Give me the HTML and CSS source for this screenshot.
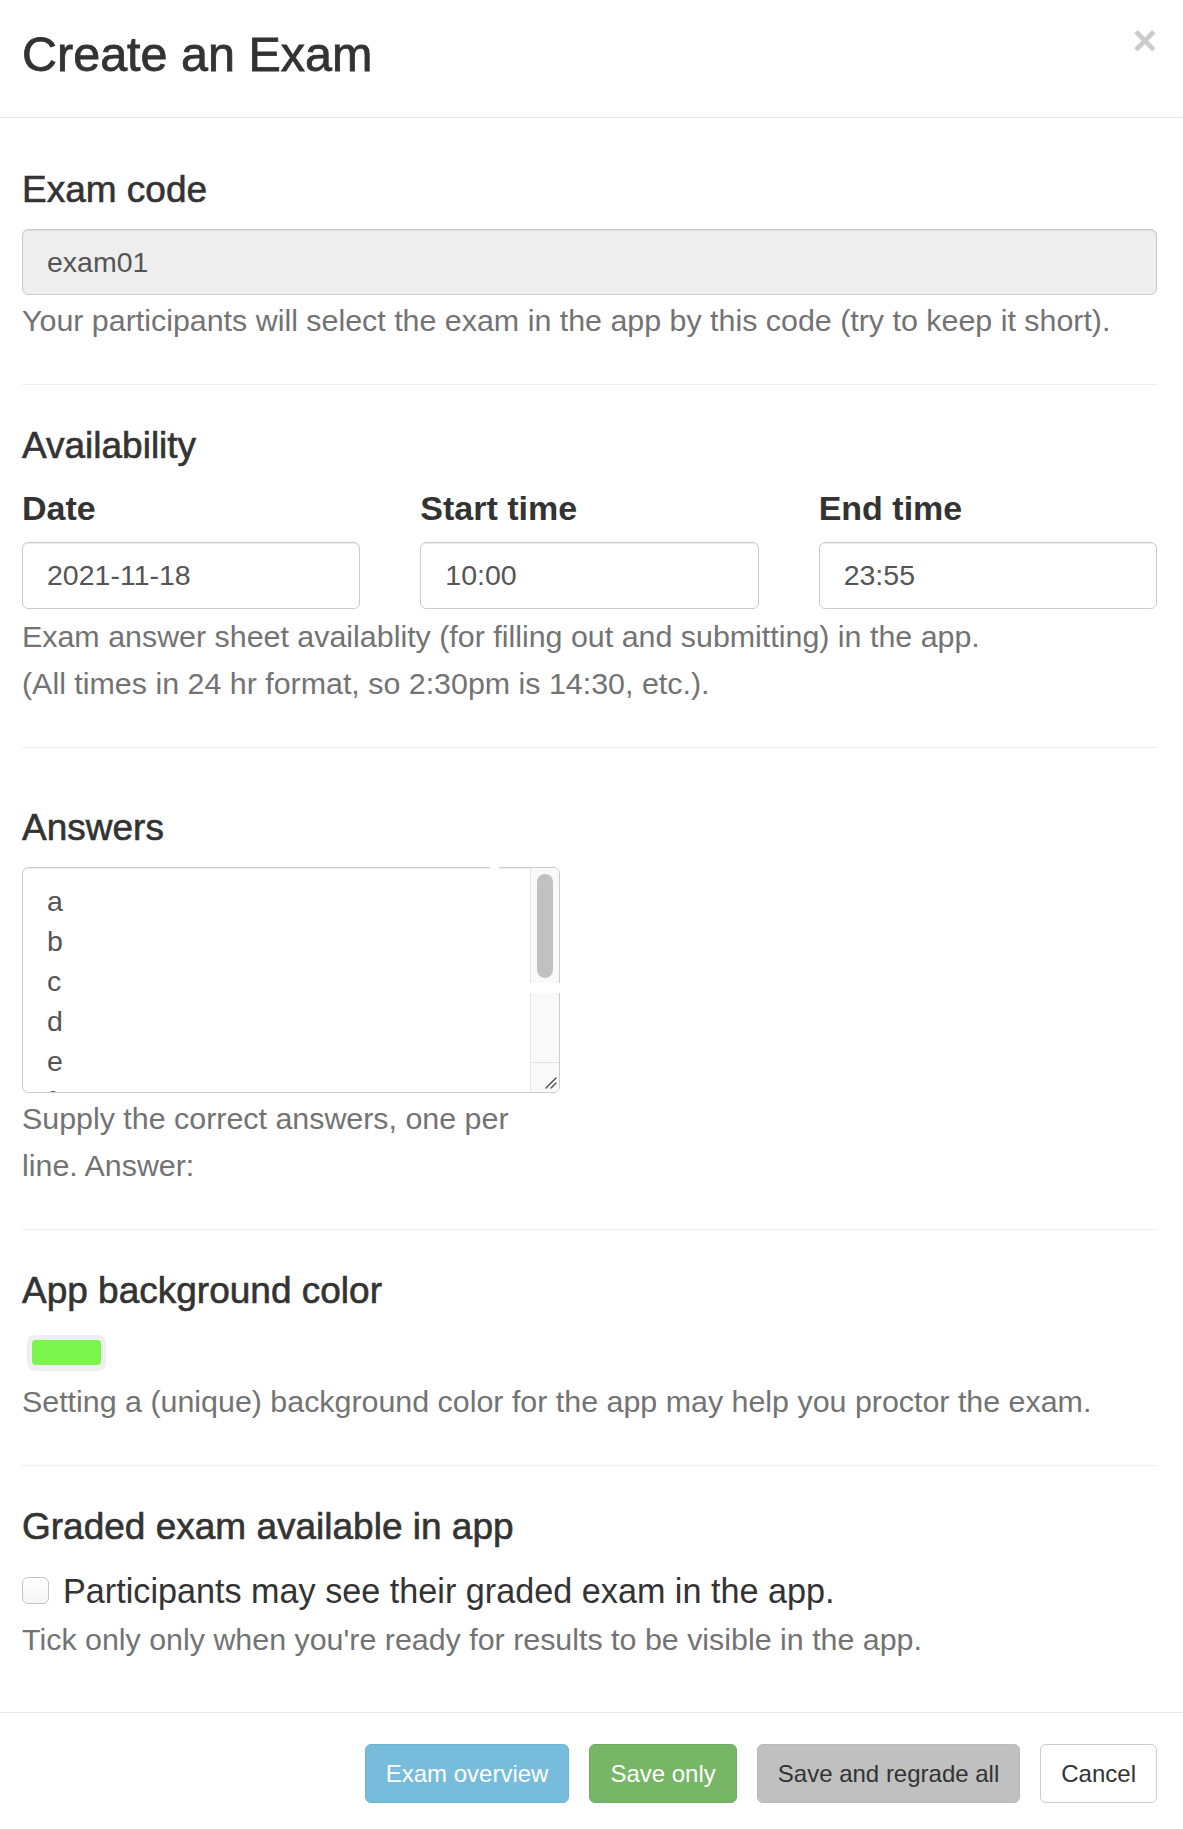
FILE: index.html
```html
<!DOCTYPE html>
<html lang="en">
<head>
<meta charset="utf-8">
<title>Create an Exam</title>
<link rel="stylesheet" href="styles.css">
</head>
<body>
<div class="modal">
  <div class="modal-header">
    <h3 class="modal-title">Create an Exam</h3>
    <button class="close" type="button" aria-label="Close">&times;</button>
  </div>
  <div class="modal-body">
    <section class="group first">
      <h4 class="group-title">Exam code</h4>
      <input class="form-control readonly" type="text" value="exam01" readonly>
      <p class="help">Your participants will select the exam in the app by this code (try to keep it short).</p>
    </section>
    <hr class="divider">
    <section class="group">
      <h4 class="group-title small-gap">Availability</h4>
      <div class="cols3">
        <div class="field">
          <label class="field-label">Date</label>
          <input class="form-control tall" type="text" value="2021-11-18">
        </div>
        <div class="field">
          <label class="field-label">Start time</label>
          <input class="form-control tall" type="text" value="10:00">
        </div>
        <div class="field">
          <label class="field-label">End time</label>
          <input class="form-control tall" type="text" value="23:55">
        </div>
      </div>
      <p class="help help-avail">Exam answer sheet availablity (for filling out and submitting) in the app.<br>(All times in 24 hr format, so 2:30pm is 14:30, etc.).</p>
    </section>
    <hr class="divider">
    <section class="group answers">
      <h4 class="group-title">Answers</h4>
      <div class="cols2">
        <div class="field">
          <div class="ta-wrap">
            <textarea class="form-control answers-box" rows="5">a
b
c
d
e
f
g
h
i</textarea>
            <div class="sb" aria-hidden="true">
              <span class="sb-thumb"></span>
              <span class="sb-gap"></span>
              <span class="sb-corner">
                <svg width="14" height="14" viewBox="0 0 14 14">
                  <path d="M13 3 L3 13 M13 8 L8 13" stroke="#444" stroke-width="1.3" fill="none" stroke-linecap="round"/>
                </svg>
              </span>
            </div>
            <span class="ta-notch" aria-hidden="true"></span>
          </div>
          <p class="help">Supply the correct answers, one per line. Answer:</p>
        </div>
        <div></div>
      </div>
    </section>
    <hr class="divider">
    <section class="group">
      <h4 class="group-title">App background color</h4>
      <div class="swatch"><span class="swatch-fill"></span></div>
      <p class="help help-swatch">Setting a (unique) background color for the app may help you proctor the exam.</p>
    </section>
    <hr class="divider">
    <section class="group">
      <h4 class="group-title">Graded exam available in app</h4>
      <label class="checkbox">
        <input type="checkbox" class="check">
        <span>Participants may see their graded exam in the app.</span>
      </label>
      <p class="help help-check">Tick only only when you're ready for results to be visible in the app.</p>
    </section>
  </div>
  <div class="modal-footer">
    <button class="btn btn-info" type="button">Exam overview</button>
    <button class="btn btn-success" type="button">Save only</button>
    <button class="btn btn-gray" type="button">Save and regrade all</button>
    <button class="btn btn-default" type="button">Cancel</button>
  </div>
</div>
</body>
</html>
```
FILE: styles.css
```css
html, body {
  margin: 0;
  padding: 0;
  background: #fff;
}

body {
  font-family: "Liberation Sans", Arial, Helvetica, sans-serif;
  color: #333;
}

.modal {
  width: 1183px;
}

.modal-header {
  display: flex;
  justify-content: space-between;
  align-items: flex-start;
  padding: 28px 26px 36px 22px;
  border-bottom: 1px solid #e5e5e5;
}

.modal-title {
  margin: 0;
  font-size: 48.5px;
  line-height: 53px;
  font-weight: normal;
  color: #333;
  -webkit-text-stroke: 0.8px #333;
}

.close {
  margin: -8px 0 0 0;
  padding: 0;
  border: 0;
  background: transparent;
  font-family: "Liberation Sans", Arial, sans-serif;
  font-size: 42px;
  font-weight: bold;
  line-height: 1;
  color: #000;
  opacity: 0.2;
  cursor: pointer;
}

.modal-body {
  display: flex;
  flex-direction: column;
  padding: 0 26px 0 22px;
}

.group {
  display: flex;
  flex-direction: column;
}

.group-title {
  margin: 0 0 19px 0;
  font-size: 37px;
  line-height: 41px;
  font-weight: normal;
  color: #333;
  -webkit-text-stroke: 0.6px #333;
}

.group.first .group-title {
  margin-top: 51px;
}

.group-title.small-gap {
  margin-bottom: 22px;
}

.group.answers .group-title {
  margin-top: 19px;
}

.divider {
  margin: 40px 0;
  border: 0;
  border-top: 1px solid #eee;
  height: 0;
}

.form-control {
  display: block;
  box-sizing: border-box;
  width: 100%;
  height: 66px;
  margin: 0;
  padding: 0 24px;
  border: 1px solid #ccc;
  border-radius: 6px;
  background: #fff;
  font-family: "Liberation Sans", Arial, sans-serif;
  font-size: 28.5px;
  color: #555;
  box-shadow: inset 0 1px 1px rgba(0, 0, 0, 0.075);
  outline: none;
}

.form-control.readonly {
  background: #eee;
}

.form-control.tall {
  height: 67px;
}

.help {
  margin: 2px 0 0 0;
  font-size: 30.4px;
  line-height: 47px;
  color: #737373;
}

.help-avail {
  margin-top: 4px;
}

.cols3 {
  display: grid;
  grid-template-columns: 1fr 1fr 1fr;
  column-gap: 60px;
}

.cols2 {
  display: grid;
  grid-template-columns: 1fr 1fr;
  column-gap: 60px;
}

.field {
  min-width: 0;
}

.field-label {
  display: block;
  margin-bottom: 14px;
  font-size: 34px;
  line-height: 40px;
  font-weight: bold;
  color: #333;
}

.ta-wrap {
  position: relative;
}

.answers-box {
  height: 226px;
  padding: 13px 24px;
  line-height: 40px;
  resize: none;
  overflow: hidden;
  white-space: pre;
}

.sb {
  position: absolute;
  top: 1px;
  right: 1px;
  bottom: 1px;
  width: 29px;
  box-sizing: border-box;
  background: #f9f9f9;
  border-left: 1px solid #e6e6e6;
  border-radius: 0 5px 5px 0;
}

.sb-thumb {
  position: absolute;
  top: 6px;
  left: 6px;
  width: 16px;
  height: 104px;
  border-radius: 8px;
  background: #c1c1c1;
}

.sb-gap {
  position: absolute;
  top: 115px;
  left: -1px;
  right: -2px;
  height: 10px;
  background: #fff;
}

.sb-corner {
  position: absolute;
  left: 0;
  right: 0;
  bottom: 0;
  height: 30px;
  box-sizing: border-box;
  border-top: 1px solid #e2e2e2;
  display: flex;
  justify-content: flex-end;
  align-items: flex-end;
  padding: 0 2px 3px 0;
}

.ta-notch {
  position: absolute;
  top: 0;
  left: 468px;
  width: 9px;
  height: 2px;
  background: #fff;
}

.swatch {
  display: flex;
  align-self: flex-start;
  box-sizing: border-box;
  margin: 5px 0 0 5px;
  width: 79px;
  height: 36px;
  padding: 5px 5px 6px 5px;
  background: #efefef;
  border-radius: 8px;
}

.swatch-fill {
  display: block;
  width: 69px;
  height: 25px;
  background: #7af54b;
  border-radius: 4px;
}

.help-swatch {
  margin-top: 7px;
}

.checkbox {
  display: flex;
  align-items: center;
  gap: 14px;
  margin-top: 5px;
  font-size: 34.2px;
  line-height: 40px;
  color: #333;
}

.check {
  -webkit-appearance: none;
  appearance: none;
  box-sizing: border-box;
  width: 27px;
  height: 27px;
  margin: -2px 0 0 0;
  border: 1px solid #c4c4c4;
  border-radius: 6px;
  background: linear-gradient(#fff, #f6f6f6);
  flex: none;
}

.help-check {
  margin-top: 5px;
}

.modal-footer {
  display: flex;
  justify-content: flex-end;
  gap: 20px;
  margin-top: 49px;
  padding: 31px 26px 0 22px;
  border-top: 1px solid #e5e5e5;
}

.btn {
  box-sizing: border-box;
  height: 59px;
  padding: 0 20px;
  border: 1px solid transparent;
  border-radius: 6px;
  font-family: "Liberation Sans", Arial, sans-serif;
  font-size: 24px;
  line-height: 1;
  cursor: pointer;
}

.btn-info {
  background: #77bcda;
  border-color: #6db5d5;
  color: #fff;
}

.btn-success {
  background: #77b567;
  border-color: #6dae5d;
  color: #fff;
}

.btn-gray {
  background: #c0c0c0;
  border-color: #bababa;
  color: #333;
}

.btn-default {
  background: #fff;
  border-color: #ccc;
  color: #333;
}
```
